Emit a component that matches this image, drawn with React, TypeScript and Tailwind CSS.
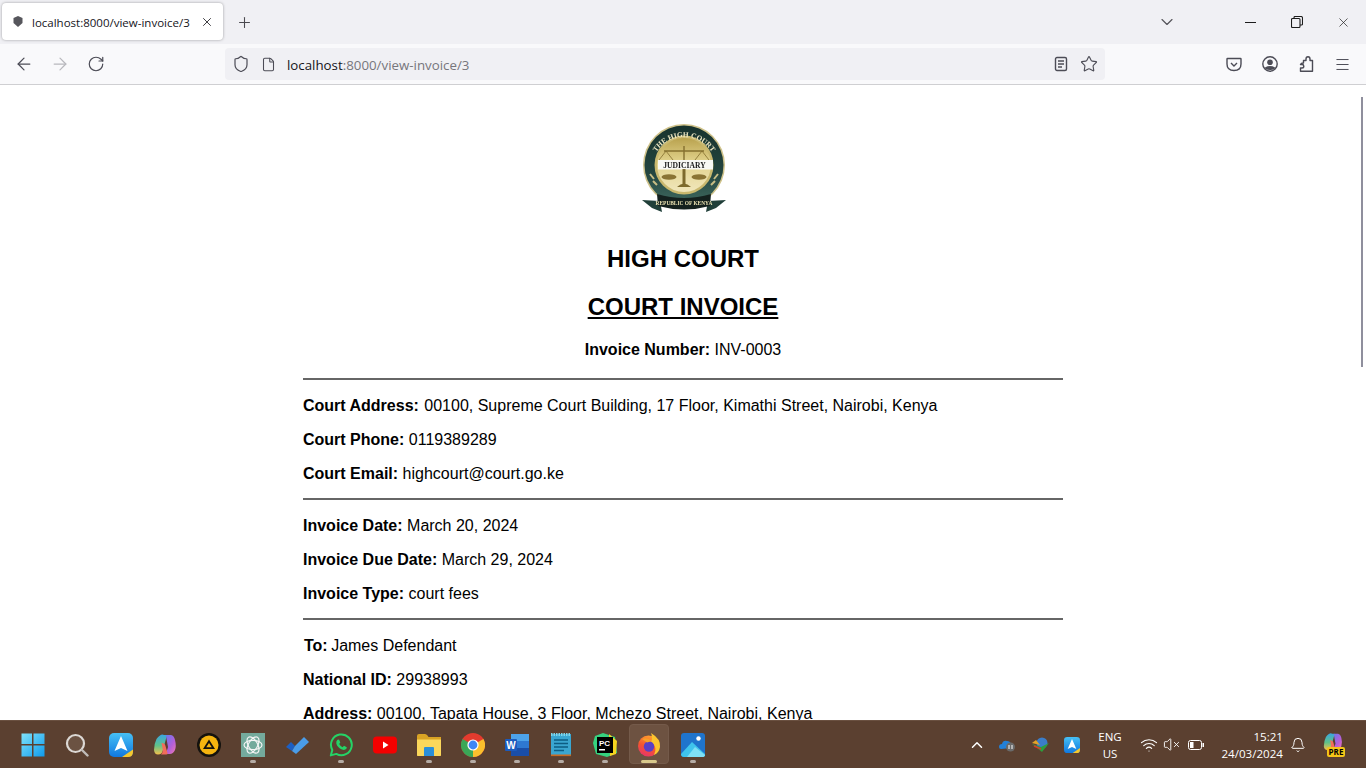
import React from "react";
import { ArrowLeft, ArrowRight, RotateCw, Shield, File, Star, Menu, Plus, X, ChevronDown, ChevronUp, Bell, Wifi, VolumeX } from "lucide-react";

const ui = "font-['Open_Sans','Noto_Sans',sans-serif]";

function Row({ label, value, extra = "", valueClass = "" }: { label: string; value: string; extra?: string; valueClass?: string }) {
  return (
    <p className={"text-[16px] leading-[20px] text-black " + extra}>
      <b>{label}</b> <span className={valueClass}>{value}</span>
    </p>
  );
}

function Divider() {
  return <div className="h-[2px] bg-[#666] w-full" />;
}

function Logo() {
  return (
    <svg className="blur-[0.4px]" width="90" height="90" viewBox="0 0 90 90">
      <defs>
        <path id="arcTop" d="M13 46 A33 33 0 0 1 79 46" fill="none" />
        <linearGradient id="ring" x1="0" y1="0" x2="0" y2="1">
          <stop offset="0" stopColor="#17322d" />
          <stop offset="0.6" stopColor="#24453f" />
          <stop offset="1" stopColor="#3f6a60" />
        </linearGradient>
        <linearGradient id="inner" x1="0" y1="0" x2="0" y2="1">
          <stop offset="0" stopColor="#b9a24e" />
          <stop offset="0.45" stopColor="#e3d48e" />
          <stop offset="1" stopColor="#f0e6bb" />
        </linearGradient>
      </defs>
      <circle cx="46" cy="41" r="41" fill="#cfc28a" />
      <circle cx="46" cy="41" r="39.5" fill="url(#ring)" />
      <circle cx="46" cy="41" r="29.5" fill="#c9b86e" />
      <circle cx="46" cy="41" r="27" fill="url(#inner)" />
      <path d="M46 22 V62 M26 27 H66" stroke="#85702f" strokeWidth="1.4" fill="none" />
      <path d="M28 27 L21 36 M28 27 L35 36 M64 27 L57 36 M64 27 L71 36" stroke="#85702f" strokeWidth="0.8" fill="none" />
      <rect x="20" y="36" width="55" height="9.5" fill="#f8f8f4" />
      <path d="M46 45 V62" stroke="#7d6a2c" strokeWidth="3" fill="none" />
      <path d="M39 63 Q46 56 53 63 Z" fill="#7d6a2c" />
      <ellipse cx="31" cy="53" rx="7.5" ry="2.8" fill="#8a7434" />
      <ellipse cx="61" cy="53" rx="7.5" ry="2.8" fill="#8a7434" />
      <text x="46.5" y="44" textAnchor="middle" fontFamily="'Liberation Serif',serif" fontWeight="700" fontSize="7.6" fill="#1a1a1a">JUDICIARY</text>
      <text fontFamily="'Liberation Serif',serif" fontWeight="700" fontSize="7.4" fill="#efe8c4">
        <textPath href="#arcTop" startOffset="50%" textAnchor="middle">THE HIGH COURT</textPath>
      </text>
      <path d="M12 50 l4 5 M80 50 l-4 5 M15 57 l4 4 M77 57 l-4 4" stroke="#c9bd84" strokeWidth="2" />
      <path d="M4 76 L22 77 L24 88 L14 84 Z" fill="#203f39" />
      <path d="M88 76 L70 77 L68 88 L78 84 Z" fill="#203f39" />
      <path d="M19 70 Q46 78 73 70 L72 82 Q46 89 20 82 Z" fill="#14211e" />
      <text x="46" y="81" textAnchor="middle" fontFamily="'Liberation Serif',serif" fontWeight="700" fontSize="5.4" fill="#e8e0b0">REPUBLIC OF KENYA</text>
    </svg>
  );
}

function Copilot({ w = 24, h = 24, id }: { w?: number; h?: number; id: string }) {
  return (
    <svg width={w} height={h} viewBox="0 0 24 24">
      <defs>
        <linearGradient id={id + "a"} x1="0" y1="0" x2="0" y2="1">
          <stop offset="0" stopColor="#3aa6e0" />
          <stop offset="0.55" stopColor="#5fc28a" />
          <stop offset="1" stopColor="#f5c04a" />
        </linearGradient>
        <linearGradient id={id + "b"} x1="0" y1="0" x2="1" y2="1">
          <stop offset="0" stopColor="#5e7df0" />
          <stop offset="0.6" stopColor="#b45fd8" />
          <stop offset="1" stopColor="#f07ab0" />
        </linearGradient>
      </defs>
      <path d="M7 2.5 Q9 1 11 2 H14 L10 17 Q9 21.5 5 21.5 Q1.5 21.5 1 17 Q1 11 3.5 6 Q5 3.5 7 2.5 Z" fill={"url(#" + id + "a)"} />
      <path d="M13 3 Q12.5 1.8 14.5 2 H18 Q21 2.5 22 7 Q23.5 13 22 17 Q20 21.5 16 21 H11 Q14 19 15 14 Z" fill={"url(#" + id + "b)"} />
      <path d="M8.5 10 Q12 10 12.5 13 L14.5 20 Q15 21.5 13 21.5 H8 Q10.5 19 9.5 15 Z" fill="#f26d5b" />
    </svg>
  );
}

function Spark({ size, id }: { size: number; id: string }) {
  return (
    <svg width={size} height={size} viewBox="0 0 24 24">
      <defs>
        <linearGradient id={id} x1="0" y1="0" x2="0" y2="1">
          <stop offset="0" stopColor="#46c0f5" />
          <stop offset="1" stopColor="#1078e0" />
        </linearGradient>
      </defs>
      <rect width="24" height="24" rx="5" fill={"url(#" + id + ")"} />
      <path d="M12 3 L18.5 18 L12 15 L5.5 18 Z" fill="#fff" />
      <path d="M13 24 L24 16.5 V19 Q24 24 19 24 Z" fill="#f5c72e" />
    </svg>
  );
}

function TaskIcon({ children, dot, active }: { children: React.ReactNode; dot?: boolean; active?: boolean }) {
  return (
    <div className="relative w-[44px] h-[47px] flex items-center justify-center">
      {active && <div className="absolute left-[2px] top-[3px] w-[40px] h-[40px] rounded-[4px] bg-[#6d5241] border border-[#745a4a]" />}
      <div className="relative w-[24px] h-[24px] flex items-center justify-center">{children}</div>
      {dot && <div className="absolute left-[19px] top-[39px] w-[6px] h-[3px] rounded-full bg-[#b5aba4]" />}
      {active && <div className="absolute left-[14px] top-[39px] w-[16px] h-[3px] rounded-full bg-[#d9c98c]" />}
    </div>
  );
}

export default function App() {
  return (
    <div className="w-[1366px] h-[768px] flex flex-col overflow-hidden bg-white">
      {/* Tab strip */}
      <div className={"h-[44px] shrink-0 bg-[#f0f0f4] flex items-center relative " + ui}>
        <div className="ml-[2px] mt-[-1px] w-[221px] h-[37px] bg-white rounded-[4px] shadow-[0_0_3px_rgba(0,0,0,0.35)] flex items-center">
          <svg className="ml-[11px] shrink-0" width="10" height="11" viewBox="0 0 10 11">
            <path d="M5 0 L9.5 2 L9.5 7 L5 11 L0.5 7 L0.5 2 Z" fill="#56565c" />
          </svg>
          <span className="ml-[9px] mt-[2px] text-[11.5px] leading-[16px] text-[#15141a] whitespace-nowrap">localhost:8000/view-invoice/3</span>
          <X className="ml-[10px] shrink-0 text-[#15141a]" size={14} strokeWidth={1.4} />
        </div>
        <Plus className="ml-[13px] text-[#4b4a50]" size={17} strokeWidth={1.5} />
        <div className="ml-auto flex items-center text-[#1c1c1c]">
          <ChevronDown className="mr-[68px] text-[#55545a]" size={20} strokeWidth={1.4} />
          <div className="w-[11px] h-[1px] bg-[#1c1c1c] mr-[35px]" />
          <svg className="mr-[33px]" width="12" height="12" viewBox="0 0 12 12" fill="none" stroke="#1c1c1c" strokeWidth="1.1">
            <rect x="0.5" y="2.5" width="8.5" height="9" rx="1" />
            <path d="M3 2.5 V1.5 Q3 0.5 4 0.5 H10 Q11.5 0.5 11.5 2 V8 Q11.5 9 10.5 9 H9" />
          </svg>
          <X className="mr-[15px]" size={15} strokeWidth={1.1} />
        </div>
      </div>
      {/* Toolbar */}
      <div className={"h-[41px] shrink-0 bg-[#f9f9fb] border-b border-[#cfcfd2] flex items-center relative " + ui}>
        <ArrowLeft className="ml-[14px] text-[#4c4c56]" size={20} strokeWidth={1.5} />
        <ArrowRight className="ml-[16px] text-[#b8b8bd]" size={20} strokeWidth={1.5} />
        <RotateCw className="ml-[17px] text-[#4c4c56]" size={18} strokeWidth={1.6} />
        <div className="ml-[120px] w-[880px] h-[32px] rounded-[4px] bg-[#f0f0f4] flex items-center">
          <Shield className="ml-[7px] text-[#4c4c56]" size={18} strokeWidth={1.6} />
          <File className="ml-[11px] text-[#4c4c56]" size={15} strokeWidth={1.7} />
          <span className="ml-[11px] mt-[2px] text-[13.3px] leading-[18px] text-[#15141a] whitespace-nowrap">
            localhost<span className="text-[#77767c]">:8000/view-invoice/3</span>
          </span>
          <svg className="ml-auto" width="14" height="16" viewBox="0 0 14 16" fill="none" stroke="#4c4c56" strokeWidth="1.4">
            <rect x="1.5" y="1.5" width="11" height="13" rx="1.5" />
            <path d="M4 5 H10 M4 8 H10 M4 11 H8" />
          </svg>
          <Star className="ml-[12px] mr-[7px] text-[#4c4c56]" size={18} strokeWidth={1.5} />
        </div>
        <svg className="ml-[121px]" width="16" height="16" viewBox="0 0 16 16" fill="none" stroke="#4c4c56" strokeWidth="1.4">
          <path d="M1.5 2.5 H14.5 Q15 2.5 15 3 V8 Q15 14.5 8 14.5 Q1 14.5 1 8 V3 Q1 2.5 1.5 2.5 Z" />
          <path d="M5 7 L8 10 L11 7" />
        </svg>
        <svg className="ml-[20px]" width="16" height="16" viewBox="0 0 16 16">
          <circle cx="8" cy="8" r="7.2" fill="none" stroke="#4c4c56" strokeWidth="1.4" />
          <circle cx="8" cy="6.2" r="2.8" fill="#4c4c56" />
          <path d="M3 11.5 Q8 8.6 13 11.5 L13 12.5 Q8 15.5 3 12.5 Z" fill="#4c4c56" />
        </svg>
        <svg className="ml-[20px]" width="16" height="16" viewBox="0 0 16 16" fill="none" stroke="#4c4c56" strokeWidth="1.4" strokeLinejoin="round">
          <path d="M5.5 4.5 H8 V3 Q8 0.8 10 0.8 Q12 0.8 12 3 V4.5 H14.5 V15.2 H2.5 V12 H4 Q5.8 12 5.8 10.2 Q5.8 8.5 4 8.5 H2.5 Q3 7 5.5 7 Z" />
        </svg>
        <Menu className="ml-[20px] text-[#4c4c56]" size={17} strokeWidth={1.4} />
      </div>
      {/* Page */}
      <div className="flex-1 min-h-0 overflow-hidden relative font-['Liberation_Sans',Arial,sans-serif]">
        <div className="absolute right-[3px] top-[12px] w-[2px] h-[270px] bg-[#8f8f9d]" />
        <div className="w-[760px] ml-[303px] pt-[39px]">
          <div className="h-[90px] flex justify-center"><Logo /></div>
          <h1 className="mt-[30px] text-[24px] leading-[30px] font-bold text-center text-black">HIGH COURT</h1>
          <h1 className="mt-[18px] text-[24px] leading-[30px] font-bold text-center text-black underline">COURT INVOICE</h1>
          <p className="mt-[18px] text-[16px] leading-[20px] text-center text-black"><b>Invoice Number:</b> INV-0003</p>
          <div className="mt-[18px]"><Divider /></div>
          <div className="mt-[16px] flex flex-col gap-[14px]">
            <Row label="Court Address:" value="00100, Supreme Court Building, 17 Floor, Kimathi Street, Nairobi, Kenya" valueClass="ml-px" />
            <Row label="Court Phone:" value="0119389289" />
            <Row label="Court Email:" value="highcourt@court.go.ke" />
          </div>
          <div className="mt-[14px]"><Divider /></div>
          <div className="mt-[16px] flex flex-col gap-[14px]">
            <Row label="Invoice Date:" value="March 20, 2024" />
            <Row label="Invoice Due Date:" value="March 29, 2024" />
            <Row label="Invoice Type:" value="court fees" />
          </div>
          <div className="mt-[14px]"><Divider /></div>
          <div className="mt-[16px] flex flex-col gap-[14px]">
            <Row label="To:" value="James Defendant" extra="ml-px" valueClass="ml-[-1px]" />
            <Row label="National ID:" value="29938993" />
            <Row label="Address:" value="00100, Tapata House, 3 Floor, Mchezo Street, Nairobi, Kenya" />
          </div>
        </div>
      </div>
      {/* Taskbar */}
      <div className={"h-[48px] shrink-0 bg-[#5b4030] flex items-center border-t border-[#6a5040] text-white " + ui}>
        <div className="ml-[11px] flex items-center">
          <TaskIcon>
            <svg width="24" height="24" viewBox="0 0 24 24">
              <defs>
                <linearGradient id="win" x1="0" y1="0" x2="1" y2="1">
                  <stop offset="0" stopColor="#7fe3fb" />
                  <stop offset="1" stopColor="#0f9bec" />
                </linearGradient>
              </defs>
              <path d="M0.5 0.5 H11 V11 H0.5 Z M12.5 0.5 H23.5 V11 H12.5 Z M0.5 12.5 H11 V23.5 H0.5 Z M12.5 12.5 H23.5 V23.5 H12.5 Z" fill="url(#win)" />
            </svg>
          </TaskIcon>
          <TaskIcon>
            <svg width="24" height="24" viewBox="0 0 24 24" fill="none">
              <circle cx="10.5" cy="10.5" r="8.5" stroke="#dcd8d4" strokeWidth="2.2" fill="#6b5242" />
              <path d="M17 17 L22.5 22.5" stroke="#c0bcb8" strokeWidth="2.4" strokeLinecap="round" />
            </svg>
          </TaskIcon>
          <TaskIcon><Spark size={24} id="spk1" /></TaskIcon>
          <TaskIcon><Copilot id="cop1" /></TaskIcon>
          <TaskIcon>
            <svg width="24" height="24" viewBox="0 0 24 24">
              <circle cx="12" cy="12" r="12" fill="#14120e" />
              <circle cx="12" cy="12" r="9.5" fill="#f5b40f" />
              <path d="M12 6.5 L18 16 H6 Z M12 10 L9.2 14.2 H14.8 Z" fill="#14120e" fillRule="evenodd" />
            </svg>
          </TaskIcon>
          <TaskIcon dot>
            <svg width="24" height="24" viewBox="0 0 24 24" fill="none">
              <rect width="24" height="24" fill="#74aa9c" />
              <g stroke="#f4f4f4" strokeWidth="1.2">
                <ellipse cx="12" cy="12" rx="9" ry="4.6" />
                <ellipse cx="12" cy="12" rx="9" ry="4.6" transform="rotate(60 12 12)" />
                <ellipse cx="12" cy="12" rx="9" ry="4.6" transform="rotate(120 12 12)" />
              </g>
            </svg>
          </TaskIcon>
          <TaskIcon>
            <svg width="24" height="24" viewBox="0 0 24 24">
              <path d="M1 14 L6 9 L10 13 L7 18 Z" fill="#1c5fc4" />
              <path d="M7 18 L10 13 L19 4 L24 9 L11 21 Z" fill="#4a9ce8" />
            </svg>
          </TaskIcon>
          <TaskIcon dot>
            <svg width="24" height="24" viewBox="0 0 24 24" fill="none">
              <path d="M1.8 22.4 L3.3 16.9 A10.4 10.4 0 1 1 7.3 20.9 Z" stroke="#25d366" strokeWidth="2" strokeLinejoin="round" />
              <path d="M8.5 6.8 L10 6.6 L11.3 9.6 L10.2 11 Q11.5 13.3 13.6 14.2 L15 12.8 L17.8 14.2 L17.4 15.8 Q15.8 17.6 13 16.6 Q8.4 14.6 7.3 10.5 Q7 8 8.5 6.8 Z" fill="#25d366" />
            </svg>
          </TaskIcon>
          <TaskIcon>
            <svg width="24" height="24" viewBox="0 0 24 24">
              <rect y="3.5" width="24" height="17" rx="4" fill="#f40000" />
              <path d="M10 8.5 L15.5 12 L10 15.5 Z" fill="#fff" />
            </svg>
          </TaskIcon>
          <TaskIcon dot>
            <svg width="24" height="24" viewBox="0 0 24 24">
              <path d="M0 3 Q0 1 2 1 H8 Q9.5 1 10.5 2.5 L11.5 4 H24 V22 Q24 23 23 23 H1 Q0 23 0 22 Z" fill="#d9a324" />
              <path d="M0 6.5 H24 V22 Q24 23 23 23 H1 Q0 23 0 22 Z" fill="#fbd75b" />
              <path d="M7 15 Q7 14 8 14 H16 Q17 14 17 15 V23 H7 Z" fill="#2b8fd8" />
            </svg>
          </TaskIcon>
          <TaskIcon dot>
            <svg width="24" height="24" viewBox="0 0 24 24">
              <circle cx="12" cy="12" r="12" fill="#e33b2e" />
              <path d="M12 12 L22.4 6 A12 12 0 0 1 12 24 Z" fill="#fbc02d" />
              <path d="M12 12 L12 24 A12 12 0 0 1 1.6 6 Z" fill="#3aa757" />
              <circle cx="12" cy="12" r="5.6" fill="#fff" />
              <circle cx="12" cy="12" r="4.4" fill="#3f86f4" />
            </svg>
          </TaskIcon>
          <TaskIcon dot>
            <svg width="24" height="24" viewBox="0 0 24 24">
              <rect x="6" y="1" width="18" height="22" rx="1.5" fill="#2e78d2" />
              <rect x="6" y="1" width="18" height="7" fill="#4da3ea" />
              <rect x="6" y="15" width="18" height="8" fill="#1a4ea8" />
              <rect x="0" y="6" width="12" height="12" rx="1" fill="#1b5bbe" />
              <text x="6" y="15.5" textAnchor="middle" fontFamily="'Liberation Sans',sans-serif" fontWeight="700" fontSize="10" fill="#fff">W</text>
            </svg>
          </TaskIcon>
          <TaskIcon dot>
            <svg width="24" height="24" viewBox="0 0 24 24">
              <rect x="2" y="1" width="20" height="22" fill="#3aa6d0" />
              <rect x="2" y="21.5" width="20" height="1.6" fill="#c76a22" />
              <path d="M2 1.5 H22" stroke="#7fd5ea" strokeWidth="3" strokeDasharray="1.5 1" />
              <path d="M5 7 H19 M5 10.5 H19 M5 14 H19 M5 17.5 H15" stroke="#0d5d83" strokeWidth="1.6" />
            </svg>
          </TaskIcon>
          <TaskIcon dot>
            <svg width="24" height="24" viewBox="0 0 24 24">
              <path d="M2 3 L10 0 L22 4 L24 20 L14 24 L3 21 L0 10 Z" fill="#35d27f" />
              <path d="M16 1 L24 8 L23 21 L17 23 Z" fill="#f5d520" />
              <rect x="4" y="4" width="16" height="16" fill="#000" />
              <text x="6" y="12.5" fontFamily="'Liberation Sans',sans-serif" fontWeight="700" fontSize="8" fill="#fff">PC</text>
              <rect x="6" y="16" width="6" height="1.5" fill="#fff" />
            </svg>
          </TaskIcon>
          <TaskIcon active>
            <svg width="24" height="24" viewBox="0 0 24 24">
              <defs>
                <linearGradient id="fx" x1="0.7" y1="0" x2="0.3" y2="1">
                  <stop offset="0" stopColor="#ffa52e" />
                  <stop offset="0.55" stopColor="#f5552f" />
                  <stop offset="1" stopColor="#e8336b" />
                </linearGradient>
              </defs>
              <circle cx="11.5" cy="13" r="10.5" fill="url(#fx)" />
              <path d="M14 0 Q24 6 23 14 Q22 20 17 22 Q21 14 14 9 Q16 5 14 0 Z" fill="#fcc42e" />
              <circle cx="12" cy="13.5" r="5.2" fill="#5b3fc4" />
              <path d="M5 6 Q10 4 15 8 L10 9.5 Z" fill="#f7a028" />
            </svg>
          </TaskIcon>
          <TaskIcon dot>
            <svg width="24" height="24" viewBox="0 0 24 24">
              <rect width="24" height="24" rx="3" fill="#1f74cc" />
              <circle cx="17.5" cy="5.5" r="2.2" fill="#fff" />
              <path d="M0 21 L11 9 L24 21 V21 Q24 24 21 24 H3 Q0 24 0 21 Z" fill="#3fc4ec" />
              <path d="M6 24 L14 14 L24 22 Q24 24 21 24 Z" fill="#7fe0f5" />
            </svg>
          </TaskIcon>
        </div>
        <div className="ml-auto flex items-center relative h-full">
          <ChevronUp className="mr-[12px]" size={18} strokeWidth={2} />
          <svg className="mr-[16px]" width="18" height="14" viewBox="0 0 18 14">
            <path d="M1 9 Q1 6 4 6 Q5 2 9 3 Q12 3 13 6 L13 10 L3 11 Q1 11 1 9 Z" fill="#2280d8" />
            <circle cx="12.5" cy="9" r="4.5" fill="#6a6a6a" />
            <path d="M11 7 V11 M14 7 V11" stroke="#fff" strokeWidth="1" />
          </svg>
          <svg className="mr-[14px]" width="18" height="16" viewBox="0 0 18 16">
            <circle cx="10" cy="6" r="5.5" fill="#3b7dc8" />
            <path d="M0 7 L9 10 L17 6 L10 15 Z" fill="#2e9c3c" />
            <path d="M0 6 L8 8 L4 3 Z" fill="#e2a52a" />
            <path d="M2 9 L9 12" stroke="#d43a2a" strokeWidth="1.4" />
          </svg>
          <div className="mr-[15px]"><Spark size={16} id="spk2" /></div>
          <div className="w-[30px] mr-[15px] text-center text-[11.5px] leading-[17px]">ENG<br />US</div>
          <Wifi className="mr-[5px]" size={18} strokeWidth={1.6} />
          <VolumeX className="mr-[8px]" size={17} strokeWidth={1.3} />
          <svg className="mr-[16px]" width="16" height="10" viewBox="0 0 16 10" fill="none">
            <rect x="0.5" y="0.5" width="13" height="9" rx="2" stroke="#fff" />
            <rect x="2" y="2" width="3.5" height="6" fill="#fff" />
            <rect x="14.5" y="3" width="1.5" height="4" fill="#fff" />
          </svg>
          <div className="w-[63px] text-right text-[11.6px] leading-[17px] whitespace-nowrap">15:21<br />24/03/2024</div>
          <Bell className="ml-[7px] mr-[15px]" size={16} strokeWidth={1.5} />
          <div className="relative w-[24px] h-[26px] mr-[21px]">
            <Copilot w={24} h={20} id="cop2" />
            <div className="absolute left-[6px] top-[15px] w-[18px] h-[10px] rounded-[2px] bg-[#f5c518] text-[8px] leading-[10px] font-bold text-black text-center">PRE</div>
          </div>
        </div>
      </div>
    </div>
  );
}
